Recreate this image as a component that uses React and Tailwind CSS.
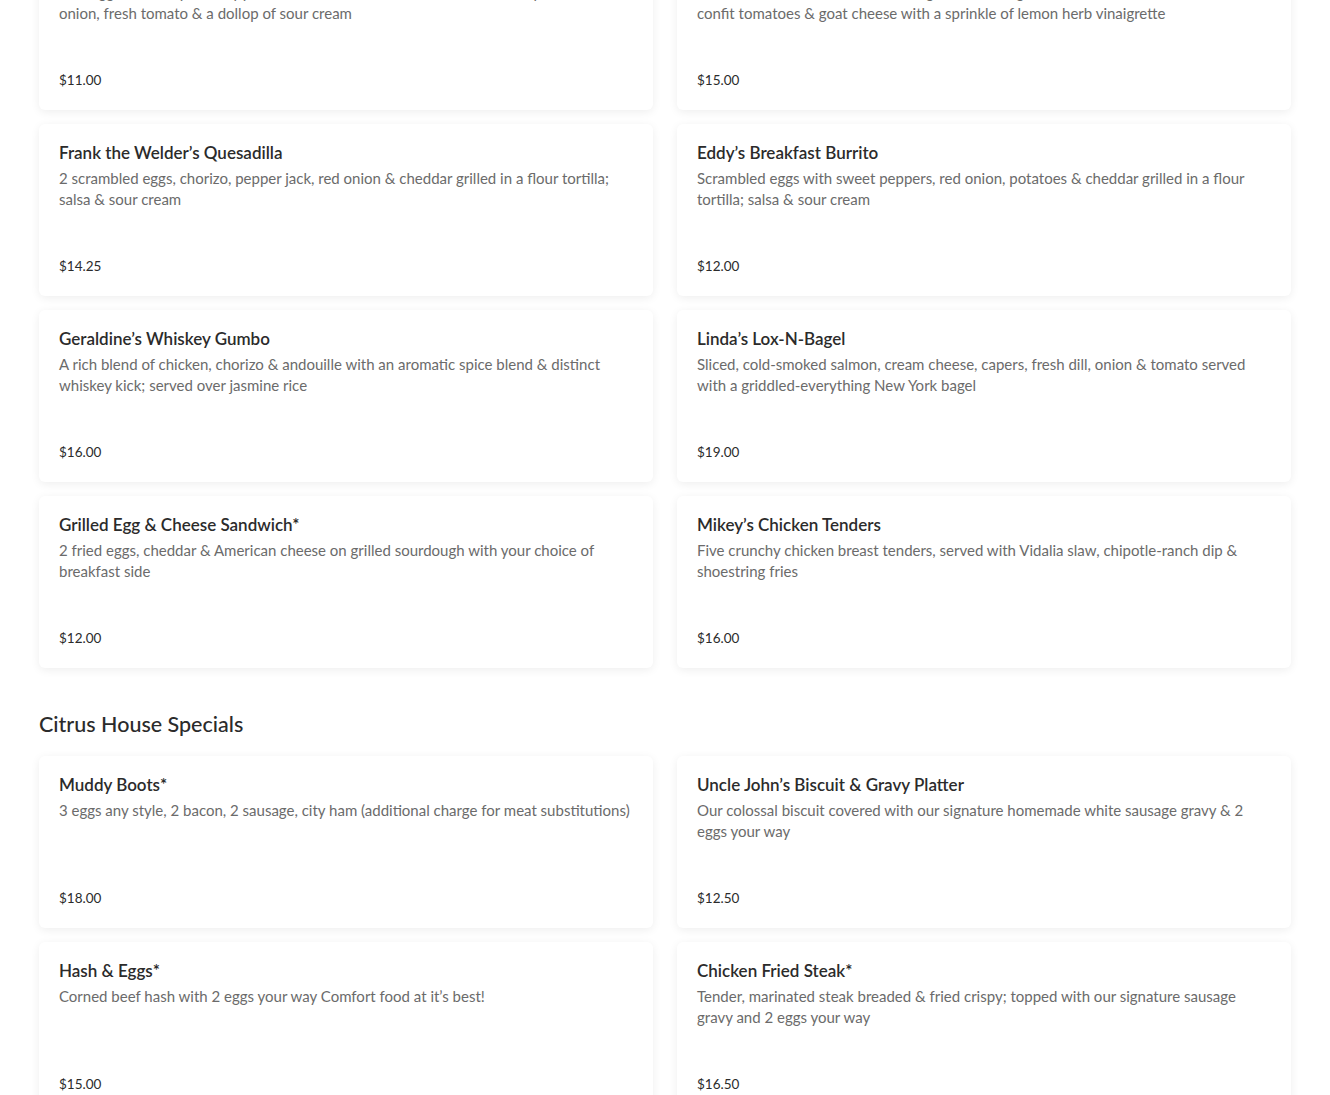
const sections = [
    {
        title: null,
        items: [
            {
                name: 'Huevos Rancheros',
                desc: 'Two eggs over easy on crispy corn tortillas, black beans, ranchero sauce, pickled red onion, fresh tomato & a dollop of sour cream',
                price: '$11.00',
            },
            {
                name: 'Avocado Toast',
                desc: 'Smashed avocado on toasted multigrain with arugula, shaved radish, roasted corn, confit tomatoes & goat cheese with a sprinkle of lemon herb vinaigrette',
                price: '$15.00',
            },
            {
                name: 'Frank the Welder’s Quesadilla',
                desc: '2 scrambled eggs, chorizo, pepper jack, red onion & cheddar grilled in a flour tortilla; salsa & sour cream',
                price: '$14.25',
            },
            {
                name: 'Eddy’s Breakfast Burrito',
                desc: 'Scrambled eggs with sweet peppers, red onion, potatoes & cheddar grilled in a flour tortilla; salsa & sour cream',
                price: '$12.00',
            },
            {
                name: 'Geraldine’s Whiskey Gumbo',
                desc: 'A rich blend of chicken, chorizo & andouille with an aromatic spice blend & distinct whiskey kick; served over jasmine rice',
                price: '$16.00',
            },
            {
                name: 'Linda’s Lox-N-Bagel',
                desc: 'Sliced, cold-smoked salmon, cream cheese, capers, fresh dill, onion & tomato served with a griddled-everything New York bagel',
                price: '$19.00',
            },
            {
                name: 'Grilled Egg & Cheese Sandwich*',
                desc: '2 fried eggs, cheddar & American cheese on grilled sourdough with your choice of breakfast side',
                price: '$12.00',
            },
            {
                name: 'Mikey’s Chicken Tenders',
                desc: 'Five crunchy chicken breast tenders, served with Vidalia slaw, chipotle-ranch dip & shoestring fries',
                price: '$16.00',
            },
        ],
    },
    {
        title: 'Citrus House Specials',
        items: [
            {
                name: 'Muddy Boots*',
                desc: '3 eggs any style, 2 bacon, 2 sausage, city ham (additional charge for meat substitutions)',
                price: '$18.00',
            },
            {
                name: 'Uncle John’s Biscuit & Gravy Platter',
                desc: 'Our colossal biscuit covered with our signature homemade white sausage gravy & 2 eggs your way',
                price: '$12.50',
            },
            {
                name: 'Hash & Eggs*',
                desc: 'Corned beef hash with 2 eggs your way Comfort food at it’s best!',
                price: '$15.00',
            },
            {
                name: 'Chicken Fried Steak*',
                desc: 'Tender, marinated steak breaded & fried crispy; topped with our signature sausage gravy and 2 eggs your way',
                price: '$16.50',
            },
        ],
    },
];

const MenuCard = ({ item }) => (
    <div className="flex h-[172px] flex-col rounded-md bg-white px-5 pt-[18px] pb-[20px] shadow-[0_2px_10px_rgba(0,0,0,0.07)]">
        <h3 className="text-[17px] leading-[22px] font-semibold text-[#2b2b2b]">{item.name}</h3>
        <p className="mt-[4px] text-[15px] leading-[21px] text-[#6b6b6b]">{item.desc}</p>
        <p className="mt-auto text-[13.5px] leading-[20px] text-[#2b2b2b]">{item.price}</p>
    </div>
);

export default function App() {
    return (
        <div className="h-[1095px] overflow-hidden bg-white font-['Lato',sans-serif]">
            <div className="-mt-[62px] px-[39px]">
                {sections.map((section, i) => (
                    <section key={i} className={section.title ? 'mt-[38px]' : ''}>
                        {section.title && (
                            <h2 className="mb-[14px] text-[21.5px] leading-[36px] font-medium text-[#2b2b2b]">
                                {section.title}
                            </h2>
                        )}
                        <div className="grid grid-cols-2 gap-x-6 gap-y-[14px]">
                            {section.items.map((item) => (
                                <MenuCard key={item.name} item={item} />
                            ))}
                        </div>
                    </section>
                ))}
            </div>
        </div>
    );
}
